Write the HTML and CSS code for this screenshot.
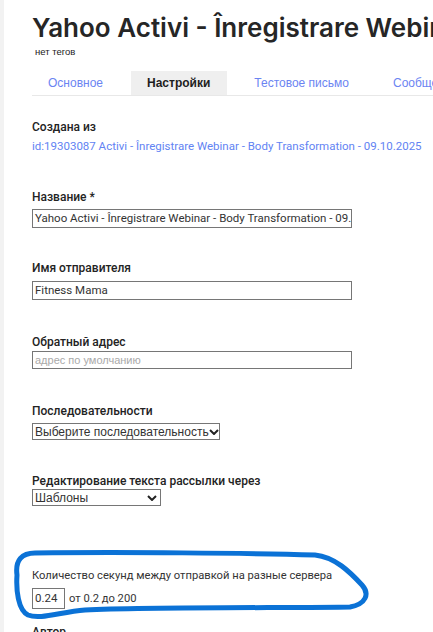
FILE: index.html
```html
<!DOCTYPE html>
<html lang="ru">
<head>
<meta charset="utf-8">
<title>Настройки рассылки</title>
<link rel="stylesheet" href="styles.css">
</head>
<body>
<div class="page">
  <div class="strip"></div>
  <main class="content">
    <h1 class="title">Yahoo Activi - Înregistrare Webinar - Body Transformation - 09.10.2025</h1>
    <div class="tags">нет тегов</div>
    <nav class="tabs">
      <span class="tab">Основное</span>
      <span class="tab tab-active">Настройки</span>
      <span class="tab">Тестовое письмо</span>
      <span class="tab">Сообщения</span>
    </nav>

    <div class="field f-created">
      <div class="label">Создана из</div>
      <a class="link" href="#">id:19303087 Activi - Înregistrare Webinar - Body Transformation - 09.10.2025</a>
    </div>

    <div class="field f-name">
      <div class="label">Название *</div>
      <div class="input input-wide">Yahoo Activi - Înregistrare Webinar - Body Transformation - 09.10.2025</div>
    </div>

    <div class="field f-sender">
      <div class="label">Имя отправителя</div>
      <div class="input input-wide">Fitness Mama</div>
    </div>

    <div class="field f-reply">
      <div class="label">Обратный адрес</div>
      <div class="input input-wide input-short placeholder">адрес по умолчанию</div>
    </div>

    <div class="field f-seq">
      <div class="label">Последовательности</div>
      <div class="select select-seq"><span>Выберите последовательность</span><svg class="chev" viewBox="0 0 10 6" width="10" height="6"><path d="M1 1 L5 5 L9 1" fill="none" stroke="#222" stroke-width="2"/></svg></div>
    </div>

    <div class="field f-edit">
      <div class="label">Редактирование текста рассылки через</div>
      <div class="select select-tpl"><span>Шаблоны</span><svg class="chev" viewBox="0 0 10 6" width="10" height="6"><path d="M1 1 L5 5 L9 1" fill="none" stroke="#222" stroke-width="2"/></svg></div>
    </div>

    <div class="field f-delay">
      <div class="label label-plain">Количество секунд между отправкой на разные сервера</div>
      <div class="delay-row">
        <div class="input input-num">0.24</div>
        <span class="hint">от 0.2 до 200</span>
      </div>
    </div>

    <div class="field f-author">
      <div class="label">Автор</div>
    </div>
  </main>
  <svg class="scribble" width="433" height="632" viewBox="0 0 433 632">
    <path d="M 17 575 C 15 560, 22 553, 35 553 C 120 552, 250 553, 315 555 C 335 557, 350 572, 362 585 C 370 594, 366 604, 350 607 C 300 608, 150 607, 85 610 C 60 612, 40 620, 28 615 C 18 610, 16 590, 17 575 Z" fill="none" stroke="#0b72d6" stroke-width="5" stroke-linejoin="round" stroke-linecap="round"/>
  </svg>
</div>
</body>
</html>
```

FILE: styles.css
```css
html, body {
  margin: 0;
  padding: 0;
  background: #ffffff;
}
body {
  font-family: Roboto, "Noto Sans", sans-serif;
  color: #222222;
  overflow: hidden;
}
.page {
  position: relative;
  display: flex;
  width: 433px;
  height: 632px;
  overflow: hidden;
}
.strip {
  width: 4px;
  flex: none;
  background: #f2f2f2;
}
.content {
  flex: 1;
  padding-left: 28px;
  min-width: 0;
}
.title {
  margin: 13px 0 0 0;
  font-family: Inter, Roboto, sans-serif;
  font-size: 26px;
  line-height: 30px;
  font-weight: 600;
  color: #262626;
  white-space: nowrap;
}
.tags {
  margin: 3px 0 0 3px;
  font-family: "Liberation Sans", Arial, sans-serif;
  font-size: 9.5px;
  line-height: 12px;
  color: #222;
}
.tabs {
  margin-top: 13px;
  display: flex;
  gap: 11px;
  height: 24px;
  border-bottom: 1px solid #e8e8e8;
  white-space: nowrap;
}
.tab {
  padding: 0 17px 0 16px;
  font-family: "Liberation Sans", Arial, sans-serif;
  font-size: 12px;
  line-height: 24px;
  color: #6b84f2;
}
.tab-active {
  background: #efefef;
  color: #1e1e1e;
  font-weight: 700;
}
.field {
  display: flex;
  flex-direction: column;
  align-items: flex-start;
}
.label {
  font-size: 12px;
  line-height: 16px;
  font-weight: 500;
  color: #232323;
  white-space: nowrap;
}
.label-plain {
  font-size: 11.2px;
  font-weight: 400;
  color: #333;
}
.link {
  margin-top: 3px;
  font-size: 11.5px;
  line-height: 16px;
  color: #6283f3;
  text-decoration: none;
  white-space: nowrap;
}
.f-created { margin-top: 23px; }
.f-name { margin-top: 35px; }
.f-sender { margin-top: 32px; }
.f-reply { margin-top: 34px; }
.f-seq { margin-top: 34px; }
.f-edit { margin-top: 33px; }
.f-delay { margin-top: 62px; }
.f-author { margin-top: 15px; }

.input {
  box-sizing: border-box;
  border: 1px solid #767676;
  font-size: 11.5px;
  color: #333;
  padding: 0 2px;
  white-space: nowrap;
  overflow: hidden;
}
.f-name .input { margin-top: 4px; }
.f-sender .input { margin-top: 5px; }
.f-reply .input { margin-top: 1px; }
.input-wide {
  width: 320px;
  height: 19px;
  line-height: 17px;
}
.input-short {
  height: 18px;
  line-height: 16px;
}
.placeholder {
  color: #a9a9a9;
  font-family: "Liberation Sans", Arial, sans-serif;
  font-size: 11px;
}
.select {
  box-sizing: border-box;
  display: flex;
  align-items: center;
  justify-content: space-between;
  border: 1px solid #767676;
  font-family: "Liberation Sans", Arial, sans-serif;
  font-size: 12px;
  color: #333;
  padding: 0 3px 0 2px;
  white-space: nowrap;
}
.select-seq {
  margin-top: 4px;
  width: 188px;
  height: 17px;
}
.select-tpl {
  width: 129px;
  height: 17px;
}
.chev { flex: none; }
.delay-row {
  margin-top: 4px;
  display: flex;
  align-items: center;
  gap: 4px;
}
.input-num {
  width: 33px;
  height: 21px;
  line-height: 19px;
  font-size: 11.5px;
}
.hint {
  font-size: 11.2px;
  color: #333;
}
.scribble {
  position: absolute;
  left: 0;
  top: 0;
  pointer-events: none;
}
```
